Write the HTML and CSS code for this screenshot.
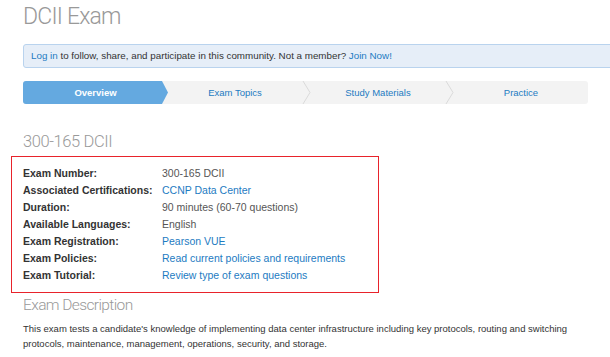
FILE: index.html
```html
<!DOCTYPE html>
<html lang="en">
<head>
    <meta charset="UTF-8">
    <meta name="viewport" content="width=device-width, initial-scale=1.0">
    <title>DCII Exam</title>
    <link rel="stylesheet" href="styles.css">
</head>
<body>
    <div class="page">
        <h1 class="title">DCII Exam</h1>

        <div class="notice">
            <a href="#">Log in</a> to follow, share, and participate in this community. Not a member? <a href="#">Join Now!</a>
        </div>

        <nav class="steps">
            <a href="#" class="step active">Overview</a>
            <a href="#" class="step first">Exam Topics</a>
            <span class="chev"><svg width="9" height="23" viewBox="0 0 9 23"><polyline points="1,0 8,11.5 1,23" fill="none" stroke="#dadada" stroke-width="1"/></svg></span>
            <a href="#" class="step">Study Materials</a>
            <span class="chev"><svg width="9" height="23" viewBox="0 0 9 23"><polyline points="1,0 8,11.5 1,23" fill="none" stroke="#dadada" stroke-width="1"/></svg></span>
            <a href="#" class="step">Practice</a>
        </nav>

        <h2 class="subtitle">300-165 DCII</h2>

        <div class="details">
            <div class="row"><span class="label">Exam Number:</span><span class="value">300-165 DCII</span></div>
            <div class="row"><span class="label">Associated Certifications:</span><a class="value" href="#">CCNP Data Center</a></div>
            <div class="row"><span class="label">Duration:</span><span class="value">90 minutes (60-70 questions)</span></div>
            <div class="row"><span class="label">Available Languages:</span><span class="value">English</span></div>
            <div class="row"><span class="label">Exam Registration:</span><a class="value" href="#">Pearson VUE</a></div>
            <div class="row"><span class="label">Exam Policies:</span><a class="value" href="#">Read current policies and requirements</a></div>
            <div class="row"><span class="label">Exam Tutorial:</span><a class="value" href="#">Review type of exam questions</a></div>
        </div>

        <h2 class="subtitle desc-title">Exam Description</h2>
        <p class="desc">This exam tests a candidate's knowledge of implementing data center infrastructure including key protocols, routing and switching protocols, maintenance, management, operations, security, and storage.</p>
    </div>
</body>
</html>
```

FILE: styles.css
```css
body {
    font-family: "Liberation Sans", Arial, sans-serif;
    margin: 0;
    padding: 0;
    background: #fff;
    color: #333;
    overflow: hidden;
}

a {
    color: #1d7bc2;
    text-decoration: none;
}

.page {
    padding: 0 10px 0 23px;
}

.title {
    font-family: Roboto, "Liberation Sans", sans-serif;
    font-weight: 300;
    font-size: 23px;
    letter-spacing: -0.8px;
    line-height: 28px;
    color: #999;
    margin: 3px 0 0 0;
}

.notice {
    margin: 13px -40px 0 0;
    height: 22px;
    line-height: 22px;
    padding-left: 7px;
    font-size: 9.8px;
    color: #333;
    background-color: #e6eef8;
    border: 1px solid #b9d3ee;
    border-radius: 3px;
}

.steps {
    display: flex;
    margin-top: 13px;
    width: 565px;
    height: 23px;
    background-color: #f3f3f3;
    border-radius: 3px;
    font-size: 9.5px;
}

.step {
    flex: 1;
    text-align: center;
    line-height: 23px;
    color: #1d7bc2;
}

.step.active {
    flex: 0 0 145px;
    background-color: #64a9e0;
    color: #fff;
    font-weight: bold;
    border-radius: 3px 0 0 3px;
    clip-path: polygon(0 0, calc(100% - 6px) 0, 100% 50%, calc(100% - 6px) 100%, 0 100%);
}

.chev {
    flex: 0 0 9px;
    height: 23px;
}

.chev svg {
    display: block;
}

.subtitle {
    font-family: Roboto, "Liberation Sans", sans-serif;
    font-weight: 300;
    font-size: 16.5px;
    letter-spacing: -0.4px;
    line-height: 20px;
    color: #999;
    margin: 28px 0 0 0;
}

.details {
    margin: 4px 0 0 -12px;
    width: 344px;
    padding: 8px 11px;
    border: 1px solid #e8232b;
    font-size: 10.5px;
}

.row {
    display: flex;
    height: 17px;
    line-height: 17px;
}

.label {
    flex: 0 0 139px;
    font-weight: bold;
    color: #333;
}

.value {
    color: #555;
}

a.value {
    color: #1d7bc2;
}

.desc-title {
    margin-top: 2px;
    font-size: 15.5px;
    letter-spacing: -0.6px;
}

.desc {
    margin: 6px 0 0 0;
    font-size: 9.5px;
    line-height: 15px;
    color: #333;
}
```
